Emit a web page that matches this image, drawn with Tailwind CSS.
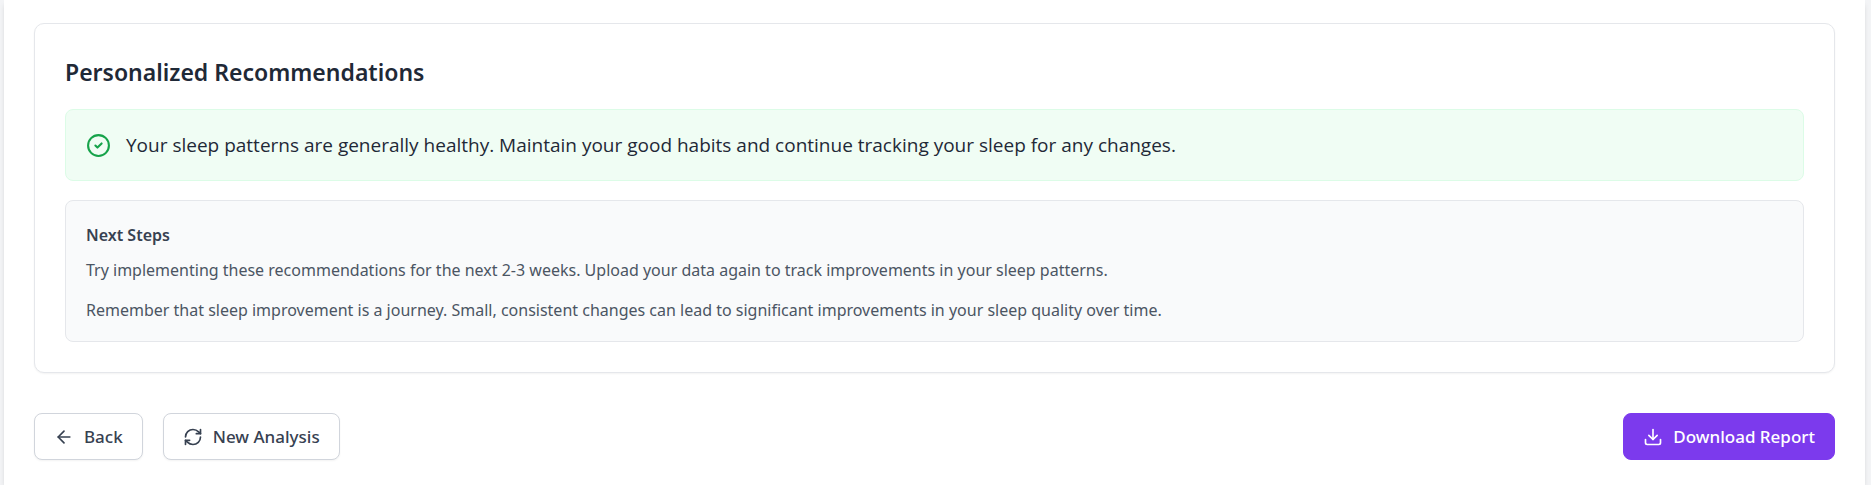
<!DOCTYPE html>
<html lang="en">
<head>
<meta charset="utf-8">
<title>Sleep Report</title>
<script src="https://cdn.jsdelivr.net/npm/@tailwindcss/browser@4"></script>
</head>
<body class="min-h-screen bg-[#f3f4f6] pl-1 pr-1.5 font-['Noto_Sans','Open_Sans',sans-serif]">
<main class="min-h-screen bg-white px-[30px] pt-[23px] pb-6 shadow-md">
  <section class="rounded-[10px] border border-gray-200 bg-white p-[30px] shadow-xs">
    <h2 class="mb-[18px] text-[23px] leading-[37px] font-semibold text-[#1f2937]">Personalized Recommendations</h2>
    <div class="mb-[19px] flex items-center gap-[15px] rounded-[8px] border border-[#dcfce7] bg-[#f0fdf4] p-5 text-[#16a34a]">
      <svg class="size-[25px] shrink-0" viewBox="0 0 24 24" fill="none" stroke="currentColor" stroke-width="2" stroke-linecap="round" stroke-linejoin="round" aria-hidden="true"><circle cx="12" cy="12" r="10"/><path d="m9 12 2 2 4-4"/></svg>
      <p class="font-['Open_Sans',sans-serif] text-[19px] leading-[30px] text-[#1f2937]">Your sleep patterns are generally healthy. Maintain your good habits and continue tracking your sleep for any changes.</p>
    </div>
    <div class="rounded-[8px] border border-gray-200 bg-[#f9fafb] px-5 pt-[21px] pb-[18px] text-[16px] leading-[26px]">
      <h3 class="mb-[9px] font-semibold text-[#374151]">Next Steps</h3>
      <p class="text-[#4b5563]">Try implementing these recommendations for the next 2-3 weeks. Upload your data again to track improvements in your sleep patterns.</p>
      <p class="mt-[14px] text-[#4b5563]">Remember that sleep improvement is a journey. Small, consistent changes can lead to significant improvements in your sleep quality over time.</p>
    </div>
  </section>
  <div class="mt-10 flex items-center justify-between text-[17px] leading-[25px] font-medium text-[#374151]">
    <div class="flex gap-5">
      <button type="button" class="flex items-center gap-2.5 rounded-[8px] border border-gray-300 bg-white px-[19px] py-2.5 shadow-xs">
        <svg class="size-5" viewBox="0 0 24 24" fill="none" stroke="currentColor" stroke-width="2" stroke-linecap="round" stroke-linejoin="round" aria-hidden="true"><path d="m12 19-7-7 7-7"/><path d="M19 12H5"/></svg>
        Back
      </button>
      <button type="button" class="flex items-center gap-2.5 rounded-[8px] border border-gray-300 bg-white px-[19px] py-2.5 shadow-xs">
        <svg class="size-5" viewBox="0 0 24 24" fill="none" stroke="currentColor" stroke-width="2" stroke-linecap="round" stroke-linejoin="round" aria-hidden="true"><path d="M3 12a9 9 0 0 1 9-9 9.75 9.75 0 0 1 6.74 2.74L21 8"/><path d="M21 3v5h-5"/><path d="M21 12a9 9 0 0 1-9 9 9.75 9.75 0 0 1-6.74-2.74L3 16"/><path d="M8 16H3v5"/></svg>
        New Analysis
      </button>
    </div>
    <button type="button" class="flex items-center gap-2.5 rounded-[8px] border border-[#7c3aed] bg-[#7c3aed] px-[19px] py-2.5 text-white">
      <svg class="size-5" viewBox="0 0 24 24" fill="none" stroke="currentColor" stroke-width="2" stroke-linecap="round" stroke-linejoin="round" aria-hidden="true"><path d="M21 15v4a2 2 0 0 1-2 2H5a2 2 0 0 1-2-2v-4"/><path d="m7 10 5 5 5-5"/><path d="M12 15V3"/></svg>
      Download Report
    </button>
  </div>
</main>
</body>
</html>
